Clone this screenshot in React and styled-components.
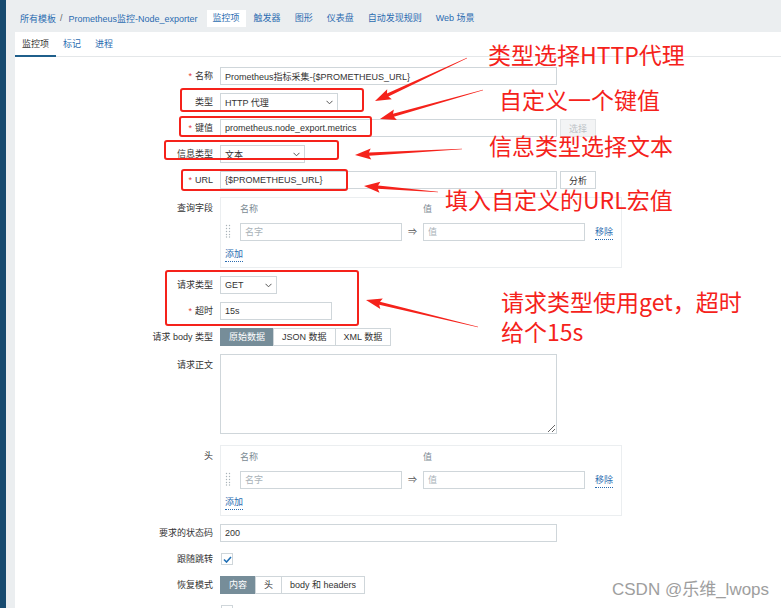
import React from "react";
import styled, { createGlobalStyle } from "styled-components";

const UI_FONT = `"Liberation Sans", Arial, "Noto Sans CJK SC", sans-serif`;
const NOTE_FONT = `"Noto Sans CJK SC", "Noto Sans", sans-serif`;
const LINK = "#2b6cb0";
const RED = "#f5221b";

const GlobalStyle = createGlobalStyle`
  html, body { margin: 0; padding: 0; background: #fff; }
  body { font-family: ${UI_FONT}; font-size: 9px; color: #333; }
  * { box-sizing: border-box; }
`;

// Layout
const Page = styled.div`
  position: relative;
  width: 781px;
  height: 608px;
  overflow: hidden;
  display: flex;
  background: #ebeef0;
`;
const SideStrip = styled.div`
  width: 6px;
  flex: none;
  background: #174a6f;
`;
const Main = styled.div`
  flex: 1;
  min-width: 0;
  display: flex;
  flex-direction: column;
`;

// Top navigation
const TopNav = styled.nav`
  height: 32px;
  flex: none;
  display: flex;
  align-items: center;
  padding: 4px 0 0 14px;
`;
const Crumbs = styled.div`
  display: flex;
  align-items: center;
  margin-right: 9px;
`;
const CrumbLink = styled.a`
  color: ${LINK};
  text-decoration: none;
`;
const CrumbSep = styled.span`
  color: #666;
  margin: 0 6px 0 4px;
`;
const NavTabs = styled.div`
  display: flex;
  gap: 2px;
`;
const NavTab = styled.a`
  padding: 0 6px;
  line-height: 17px;
  color: ${LINK};
  background: ${(p) => (p.$active ? "#fff" : "transparent")};
`;

// Content card
const Content = styled.div`
  flex: 1;
  margin-left: 9px;
  background: #fff;
  display: flex;
  flex-direction: column;
`;
const SubTabs = styled.div`
  height: 25px;
  flex: none;
  display: flex;
  border-bottom: 1px solid #e4e7e9;
`;
const SubTab = styled.a`
  display: flex;
  align-items: center;
  padding: 0 7px;
  margin-bottom: -1px;
  color: ${(p) => (p.$active ? "#333" : LINK)};
  border-bottom: 2px solid ${(p) => (p.$active ? "#1f5f8b" : "transparent")};
`;

// Form
const Form = styled.div`
  display: grid;
  grid-template-columns: 198px 1fr;
  column-gap: 7px;
  row-gap: 8px;
  padding-top: 10px;
  align-items: start;
`;
const Label = styled.div`
  text-align: right;
  line-height: 18px;
  white-space: nowrap;
  padding-top: ${(p) => (p.$top ? "2px" : "0")};
`;
const Req = styled.span`
  color: #e53b3b;
  margin-right: 3px;
`;
const Field = styled.div`
  display: flex;
  align-items: center;
  gap: 3px;
  min-height: 18px;
  margin-bottom: ${(p) => p.$after || 0}px;
`;
const TextInput = styled.input`
  width: ${(p) => p.$w}px;
  height: 18px;
  border: 1px solid #cfd6da;
  padding: 0 4px;
  font: inherit;
  color: #333;
  background: #fff;
  outline: none;
  &::placeholder { color: #a9b2b8; }
`;
const SelectBox = styled.div`
  width: ${(p) => p.$w}px;
  height: 18px;
  border: 1px solid #cfd6da;
  padding: 0 4px;
  display: flex;
  align-items: center;
  justify-content: space-between;
  background: #fff;
`;
const Btn = styled.button`
  width: 36px;
  height: 18px;
  padding: 0;
  font: inherit;
  border: 1px solid ${(p) => (p.$disabled ? "#e2e5e7" : "#cfd6da")};
  background: ${(p) => (p.$disabled ? "#f3f4f5" : "#fff")};
  color: ${(p) => (p.$disabled ? "#bcc2c6" : "#333")};
`;
const Segmented = styled.div`
  display: flex;
`;
const Segment = styled.div`
  height: 18px;
  line-height: 16px;
  padding: 0 8px;
  margin-left: -1px;
  border: 1px solid ${(p) => (p.$active ? "#768d99" : "#cfd6da")};
  background: ${(p) => (p.$active ? "#768d99" : "#fff")};
  color: ${(p) => (p.$active ? "#fff" : "#333")};
  &:first-child { margin-left: 0; }
`;
const TextArea = styled.textarea`
  width: 337px;
  height: 80px;
  border: 1px solid #cfd6da;
  font: inherit;
  resize: both;
  outline: none;
`;
const PairBox = styled.div`
  width: 402px;
  border: 1px solid #ebeef0;
  padding: 3px 0 5px 4px;
`;
const PairHead = styled.div`
  display: flex;
  line-height: 17px;
  color: #7b8a93;
  padding-left: 15px;
`;
const HeadCell = styled.span`
  width: ${(p) => p.$w}px;
`;
const PairRow = styled.div`
  display: flex;
  align-items: flex-start;
  margin-top: 5px;
`;
const Handle = styled.div`
  width: 15px;
  padding-top: 1px;
  display: flex;
`;
const Arrow = styled.span`
  width: 21px;
  line-height: 18px;
  text-align: center;
  color: #555;
`;
const TextLink = styled.a`
  color: ${LINK};
  line-height: 14px;
  border-bottom: 1px dotted ${LINK};
  margin-left: ${(p) => p.$ml || 0}px;
  margin-top: ${(p) => p.$mt || 0}px;
  align-self: flex-start;
  display: inline-block;
`;
const Check = styled.div`
  width: 12px;
  height: 12px;
  margin-left: 1px;
  border: 1px solid #cfd6da;
  display: flex;
  align-items: center;
  justify-content: center;
`;

// Annotation layer
const Markup = styled.svg`
  position: absolute;
  left: 0;
  top: 0;
  pointer-events: none;
`;
const Note = styled.div`
  position: absolute;
  left: ${(p) => p.$x}px;
  top: ${(p) => p.$y}px;
  font-family: ${NOTE_FONT};
  font-size: 23px;
  line-height: 23px;
  color: ${RED};
  white-space: nowrap;
`;
const Watermark = styled.div`
  position: absolute;
  left: 612px;
  top: 581px;
  font-family: "Liberation Sans", Arial, "Noto Sans CJK SC", sans-serif;
  font-size: 17px;
  line-height: 18px;
  color: #9e9e9e;
`;

const Chevron = () => (
  <svg width="7" height="5" viewBox="0 0 7 5">
    <polyline points="0.5,0.8 3.5,3.8 6.5,0.8" fill="none" stroke="#555" strokeWidth="1" />
  </svg>
);

const Dots = () => (
  <svg width="6" height="14" viewBox="0 0 6 14">
    {[1.5, 4.5, 7.5, 10.5, 13].map((y) =>
      [1.5, 4.5].map((x) => <circle key={`${x}-${y}`} cx={x} cy={y} r="0.7" fill="#aab3b9" />)
    )}
  </svg>
);

const Tick = () => (
  <svg width="9" height="7" viewBox="0 0 9 7">
    <polyline points="1,3.5 3.5,6 8,1" fill="none" stroke="#1f6fb5" strokeWidth="1.6" />
  </svg>
);

function Select({ w, value }) {
  return (
    <SelectBox $w={w}>
      <span>{value}</span>
      <Chevron />
    </SelectBox>
  );
}

function PairTable() {
  return (
    <PairBox>
      <PairHead>
        <HeadCell $w={183}>名称</HeadCell>
        <HeadCell $w={40}>值</HeadCell>
      </PairHead>
      <PairRow>
        <Handle><Dots /></Handle>
        <TextInput $w={162} placeholder="名字" readOnly />
        <Arrow>⇒</Arrow>
        <TextInput $w={162} placeholder="值" readOnly />
        <TextLink $ml={10} $mt={2}>移除</TextLink>
      </PairRow>
      <TextLink $mt={6}>添加</TextLink>
    </PairBox>
  );
}

const arrowPoints = (x1, y1, x2, y2) => {
  const dx = x2 - x1;
  const dy = y2 - y1;
  const len = Math.hypot(dx, dy);
  const ux = dx / len;
  const uy = dy / len;
  const nx = -uy;
  const ny = ux;
  const L = 14;
  const H = 5.5;
  const S = 1.6;
  const bx = x2 - ux * L;
  const by = y2 - uy * L;
  const pts = [
    [x1 + nx * 0.3, y1 + ny * 0.3],
    [bx + nx * S, by + ny * S],
    [bx - ux * 2 + nx * H, by - uy * 2 + ny * H],
    [x2, y2],
    [bx - ux * 2 - nx * H, by - uy * 2 - ny * H],
    [bx - nx * S, by - ny * S],
    [x1 - nx * 0.3, y1 - ny * 0.3],
  ];
  return pts.map((p) => p.map((v) => v.toFixed(1)).join(",")).join(" ");
};

const boxes = [
  [181, 89, 182, 22],
  [180, 117, 191, 19],
  [165, 141, 173, 18],
  [182, 170, 165, 20],
  [166, 271, 192, 54],
];

const arrows = [
  [467, 58, 375, 101],
  [483, 90, 380, 119],
  [462, 149, 355, 155],
  [438, 192, 364, 186],
  [478, 327, 366, 300],
];

export default function App() {
  return (
    <Page>
      <GlobalStyle />
      <SideStrip />
      <Main>
        <TopNav>
          <Crumbs>
            <CrumbLink>所有模板</CrumbLink>
            <CrumbSep>/</CrumbSep>
            <CrumbLink>Prometheus监控-Node_exporter</CrumbLink>
          </Crumbs>
          <NavTabs>
            <NavTab $active>监控项</NavTab>
            <NavTab>触发器</NavTab>
            <NavTab>图形</NavTab>
            <NavTab>仪表盘</NavTab>
            <NavTab>自动发现规则</NavTab>
            <NavTab>Web 场景</NavTab>
          </NavTabs>
        </TopNav>
        <Content>
          <SubTabs>
            <SubTab $active>监控项</SubTab>
            <SubTab>标记</SubTab>
            <SubTab>进程</SubTab>
          </SubTabs>
          <Form>
            <Label><Req>*</Req>名称</Label>
            <Field><TextInput $w={337} value="Prometheus指标采集-{$PROMETHEUS_URL}" readOnly /></Field>

            <Label>类型</Label>
            <Field><Select w={118} value="HTTP 代理" /></Field>

            <Label><Req>*</Req>键值</Label>
            <Field>
              <TextInput $w={337} value="prometheus.node_export.metrics" readOnly />
              <Btn $disabled>选择</Btn>
            </Field>

            <Label>信息类型</Label>
            <Field><Select w={85} value="文本" /></Field>

            <Label><Req>*</Req>URL</Label>
            <Field>
              <TextInput $w={337} value="{$PROMETHEUS_URL}" readOnly />
              <Btn>分析</Btn>
            </Field>

            <Label $top>查询字段</Label>
            <Field><PairTable /></Field>

            <Label>请求类型</Label>
            <Field><Select w={57} value="GET" /></Field>

            <Label><Req>*</Req>超时</Label>
            <Field><TextInput $w={112} value="15s" readOnly /></Field>

            <Label>请求 body 类型</Label>
            <Field>
              <Segmented>
                <Segment $active>原始数据</Segment>
                <Segment>JSON 数据</Segment>
                <Segment>XML 数据</Segment>
              </Segmented>
            </Field>

            <Label $top>请求正文</Label>
            <Field $after={3}><TextArea readOnly /></Field>

            <Label $top>头</Label>
            <Field><PairTable /></Field>

            <Label>要求的状态码</Label>
            <Field><TextInput $w={337} value="200" readOnly /></Field>

            <Label>跟随跳转</Label>
            <Field><Check><Tick /></Check></Field>

            <Label>恢复模式</Label>
            <Field>
              <Segmented>
                <Segment $active>内容</Segment>
                <Segment>头</Segment>
                <Segment>body 和 headers</Segment>
              </Segmented>
            </Field>

            <Label />
            <Field><Check /></Field>
          </Form>
        </Content>
      </Main>

      <Markup width="781" height="608" viewBox="0 0 781 608">
        {boxes.map(([x, y, w, h], i) => (
          <rect key={i} x={x} y={y} width={w} height={h} rx="2" fill="none" stroke={RED} strokeWidth="2" />
        ))}
        {arrows.map(([x1, y1, x2, y2], i) => (
          <polygon key={i} points={arrowPoints(x1, y1, x2, y2)} fill={RED} />
        ))}
      </Markup>

      <Note $x={488} $y={43}>类型选择HTTP代理</Note>
      <Note $x={499} $y={88}>自定义一个键值</Note>
      <Note $x={489} $y={134}>信息类型选择文本</Note>
      <Note $x={445} $y={188}>填入自定义的URL宏值</Note>
      <Note $x={501} $y={290}>请求类型使用get，超时</Note>
      <Note $x={501} $y={320}>给个15s</Note>
      <Watermark>CSDN @乐维_lwops</Watermark>
    </Page>
  );
}
